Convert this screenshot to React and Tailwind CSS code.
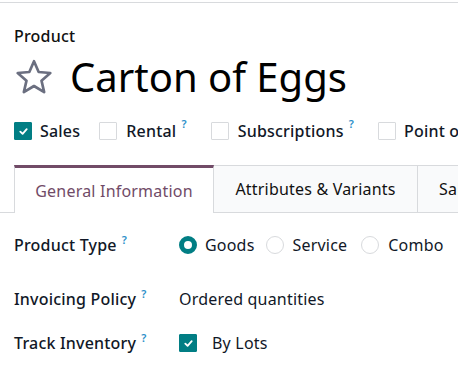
import React from 'react';

const font = { fontFamily: '"Noto Sans", "Open Sans", sans-serif' };

function Check({ checked }) {
  return checked ? (
    <span className="block w-[18px] h-[18px] bg-[#017e84] border border-[#017e84] rounded-[1px] flex items-center justify-center shrink-0">
      <svg width="11" height="11" viewBox="0 0 12 12" fill="none">
        <path d="M2.5 6.2 L5 8.5 L9.5 3.5" stroke="white" strokeWidth="2" strokeLinecap="round" strokeLinejoin="round" />
      </svg>
    </span>
  ) : (
    <span className="block w-[18px] h-[18px] bg-white border border-[#d8dadd] rounded-[1px] shrink-0" />
  );
}

function Help() {
  return <sup className="text-[#2d8fc9] text-[11px] font-semibold ml-[5px] -top-[7px] relative">?</sup>;
}

function Radio({ checked }) {
  return checked ? (
    <span className="block w-[18px] h-[18px] rounded-full border-[5px] border-[#017e84] bg-white shrink-0" />
  ) : (
    <span className="block w-[18px] h-[18px] rounded-full border border-[#d8dadd] bg-white shrink-0" />
  );
}

export default function App() {
  return (
    <div className="w-[458px] h-[370px] bg-white overflow-hidden text-[#111827] tracking-[0.2px]" style={font}>
      <div className="border-t border-[#d8dadd] mt-[2px]" />
      <div className="px-[14px] pt-[23px]">
        <div className="text-[16px] font-medium text-[#111] leading-5">Product</div>
        <div className="flex items-center gap-[16px] mt-[7px] h-[48px]">
          <svg width="40" height="40" viewBox="0 0 24 24" fill="none" className="shrink-0">
            <path d="M12 2.5 L14.8 9 L21.8 9.6 L16.5 14.2 L18.1 21.1 L12 17.4 L5.9 21.1 L7.5 14.2 L2.2 9.6 L9.2 9 Z" stroke="#6b6f80" strokeWidth="1.6" strokeLinejoin="round" />
          </svg>
          <span className="text-[40px] leading-none text-black whitespace-nowrap tracking-normal">Carton of Eggs</span>
        </div>
        <div className="flex items-center mt-[20px] h-[20px] whitespace-nowrap text-[16px]">
          <Check checked />
          <span className="ml-[8px] font-medium">Sales</span>
          <span className="ml-[19px]"><Check /></span>
          <span className="ml-[9px] font-medium">Rental</span><Help />
          <span className="ml-[24px]"><Check /></span>
          <span className="ml-[9px] font-medium">Subscriptions</span><Help />
          <span className="ml-[24px]"><Check /></span>
          <span className="ml-[8px] font-medium">Point of Sale</span>
        </div>
      </div>
      <div className="flex mt-[24px] border-b border-[#d8dadd] pl-[14px] whitespace-nowrap text-[16px] h-[48px]">
        <div className="w-[200px] shrink-0 bg-white border-t-[3px] border-t-[#714b67] border-x border-x-[#d8dadd] -mb-px flex items-center justify-center text-[#714b67]">
          General Information
        </div>
        <div className="w-[204px] shrink-0 bg-[#f9fafb] border-t border-r border-[#d8dadd] flex items-center justify-center text-[#111]">
          Attributes &amp; Variants
        </div>
        <div className="w-[200px] shrink-0 bg-[#f9fafb] border-t border-r border-[#d8dadd] flex items-center pl-[21px] text-[#111]">
          Sales
        </div>
      </div>
      <div className="px-[14px] text-[16px] whitespace-nowrap">
        <div className="flex items-center h-[24px] mt-[20px]">
          <div className="w-[165px] font-medium">Product Type<Help /></div>
          <Radio checked />
          <span className="ml-[8px]">Goods</span>
          <span className="ml-[11px]"><Radio /></span>
          <span className="ml-[9px]">Service</span>
          <span className="ml-[14px]"><Radio /></span>
          <span className="ml-[9px]">Combo</span>
        </div>
        <div className="flex items-center h-[24px] mt-[30px]">
          <div className="w-[165px] font-medium">Invoicing Policy<Help /></div>
          <span>Ordered quantities</span>
        </div>
        <div className="flex items-center h-[24px] mt-[20px]">
          <div className="w-[165px] font-medium">Track Inventory<Help /></div>
          <Check checked />
          <span className="ml-[15px]">By Lots</span>
        </div>
      </div>
    </div>
  );
}
